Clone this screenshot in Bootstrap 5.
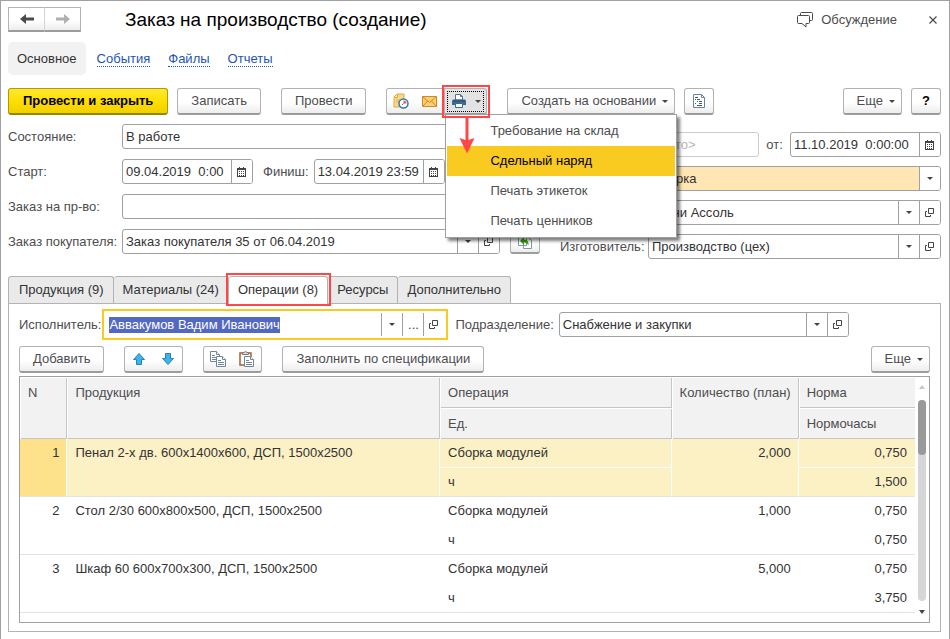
<!DOCTYPE html>
<html lang="ru">
<head>
<meta charset="utf-8">
<meta name="viewport" content="width=device-width, initial-scale=1">
<title>Заказ на производство (создание)</title>
<link rel="stylesheet" href="https://cdn.jsdelivr.net/npm/bootstrap@5.3.0/dist/css/bootstrap.min.css">
<style>
:root { --line: #a0a0a0; --ink: #333; --soft: #4d4d4d; --mark: #ff4747; }
body { font: 13px/16px "Liberation Sans", Arial, sans-serif; color: var(--soft); background: #fff; }
.window { min-height: 100vh; border: 1px solid var(--line); padding: 6px 8px 7px 7px; }
svg { display: block; flex: none; }

.title { font-size: 19px; line-height: 24px; color: #000; margin: 0 0 0 44px; font-weight: 400; }
.plain { border: 0; background: none; padding: 0; color: var(--soft); }

.sections { margin-top: 10px; gap: 18px; }
.sections a { color: #1d54b5; text-decoration: none; border-bottom: 1px dotted #1d54b5; line-height: 15px; }
.sections .current { color: var(--ink); background: #f2f2f2; border: 0; border-radius: 5px; padding: 9px 9px 8px; line-height: 16px; margin-right: -7px; }
.tools { margin-top: 13px; }

/* push buttons */
.cmd { --bs-btn-font-size: 13px; --bs-btn-line-height: 16px; --bs-btn-padding-x: 13px; --bs-btn-padding-y: 4px;
  --bs-btn-border-radius: 3px; --bs-btn-color: var(--soft); --bs-btn-border-color: #b3b3b3;
  height: 27px; border-bottom: 2px solid #9c9c9c; background: linear-gradient(#fff 55%, #ededed);
  display: inline-flex; align-items: center; justify-content: center; white-space: nowrap; }
.cmd-main { --bs-btn-padding-x: 14px; font-weight: 700; color: #000; background: linear-gradient(#ffe732, #ffdf00 50%, #f2cf00); border-color: #b09a00; border-bottom-color: #9a8600; }
.cmd-icon { width: 30px; padding: 0; }
.btn-group > .cmd-icon { flex: none; }
.btn-group > .cmd-icon:not(:first-child) { margin-left: 0; border-left: 0; }
.btn-group > .cmd-icon:not(:last-child) { border-right-color: #b3b3b3; }
.cmd-drop { padding-right: 6px; gap: 6px; }
.caret { width: 0; height: 0; border: 3px solid transparent; border-top-color: #444; border-bottom: 0; flex: none; }
.gap9 { gap: 9px; }
.gap20 { gap: 20px; }
.nav-pair .cmd { width: 37px; height: 25px; padding: 0; border-radius: 0; flex: none; }
.nav-pair .cmd:last-child { margin-left: 0; border-left-color: #d5d5d5; }
.nav-pair .cmd:first-child { border-right: 0; }

.print-btn { width: 42px; padding: 0; border-left: 0; background: #e3e3e3; border-radius: 0 3px 3px 0; }
.print-btn::after { display: none; }
.print-btn .dots { border: 1px dotted #000; display: flex; align-items: center; gap: 9px; height: 21px; width: 37px; padding-left: 4px; }
.frame { position: absolute; inset: -3px; border: 2px solid var(--mark); z-index: 1002; pointer-events: none; }
.pointer { position: absolute; left: 14px; top: 29px; z-index: 1002; pointer-events: none; }
.print-menu { --bs-dropdown-font-size: 13px; --bs-dropdown-padding-y: 1px; --bs-dropdown-padding-x: 1px; --bs-dropdown-item-padding-x: 43px;
  --bs-dropdown-item-padding-y: 7px; --bs-dropdown-border-radius: 0; --bs-dropdown-border-color: #a0a0a0; --bs-dropdown-spacer: 0;
  --bs-dropdown-link-color: var(--soft); --bs-dropdown-link-active-bg: #f9cb20; --bs-dropdown-link-active-color: #000;
  width: 232px; top: 26px; left: 0; box-shadow: 3px 3px 3px rgba(0,0,0,.5); }
.print-menu .dropdown-item { line-height: 16px; }

/* fields */
.props { margin-top: 9px; }
.field { height: 25px; border: 1px solid var(--line); border-radius: 3px; background: #fff; display: flex; min-width: 0; overflow: hidden; }
.field input, .field select { border: 0; outline: 0; background: transparent; flex: 1 1 0; width: 0; min-width: 0; padding: 0 3px; color: var(--ink); font: inherit; line-height: 16px; }
.field select { appearance: none; }
.field button { border: 0; border-left: 1px solid var(--line); background: #fff; width: 21px; flex: none; padding: 0; color: #444; display: flex; align-items: center; justify-content: center; }
.left { flex: 1 1 0; min-width: 0; display: grid; gap: 10px; align-content: start; }
.right { flex: 0 0 381px; display: grid; gap: 9px; margin-top: 8px; align-content: start; }
.line { display: flex; align-items: center; min-width: 0; }
.left .line > label:first-child { width: 114px; flex: none; white-space: nowrap; }
.right .line > label:first-child { width: 88px; flex: none; white-space: nowrap; }
.right .covered { margin-left: 88px; }
.date { flex: none; width: 131px; }
.date-long { width: 151px; }
.finish-label { margin: 0 5px 0 10px; }
.disabled-field { width: 111px; border-color: #ccc; }
.disabled-field input::placeholder { color: #b8b8b8; opacity: 1; }
.required { background: #ffe6b3; }
.refresh { margin-left: 10px; height: 25px; }

/* tabs */
.pages { margin-top: 17px; border-bottom: 0; }
.pages .nav-link { font-size: 13px; line-height: 16px; padding: 5px 9px 6px 10px; color: var(--ink); background: #eaeaea; border: 1px solid #b3b3b3; border-bottom: 0; border-radius: 3px 3px 0 0; height: 27px; margin: 0; }
.pages .nav-item + .nav-item .nav-link { border-left: 0; padding-left: 9px; }
.pages .nav-item { position: relative; }
.pages .nav-link.active { color: var(--ink); background: #fff; height: 28px; margin-bottom: -1px; border-color: #b3b3b3; }
.page { border: 1px solid #b3b3b3; padding: 5px 10px 8px; flex: 1; display: flex; flex-direction: column; }
.performer { border: 2px solid #f9cb20; padding: 1px; margin-left: 1px; width: 346px; flex: none; }
.performer .field { border-color: transparent; }
.performer input { caret-color: transparent; }
.performer input::selection { background: rgba(81,103,192,.99); color: #fff; }
.dept-label { margin: 0 5px 0 7px; }
.page .department { width: 290px; }
.list-tools { margin-top: 6px; }

/* list of operations */
.listbox { border: 1px solid var(--line); display: flex; flex: 1; margin-top: 3px; padding-bottom: 9px; }
.ops { flex: 1; table-layout: fixed; border-collapse: separate; border-spacing: 0; color: var(--ink); align-self: flex-start; }
.ops th { font-weight: 400; color: var(--soft); background: #f2f2f2; vertical-align: top; padding: 7px 8px 7px 7px; height: 31px; border: 1px solid #fff; border-width: 1px 0 0 1px; box-shadow: inset -1px -1px #c6c6c6; }
.ops th.last-col { box-shadow: inset 0 -1px #c6c6c6; }
.ops td { vertical-align: top; height: 29px; padding: 6px 8px; }
.ops tr.second td, .ops td[rowspan] { border-bottom: 1px solid #e3e3e3; }
.ops .num { text-align: right; }
.ops tr.sel td { background: #fcf0c5; border-right: 1px solid #fff; padding-right: 7px; }
.ops tr.sel td.mark-cell { background: #fde28b; }
.ops tr.sel.first td:not([rowspan]) { border-bottom: 1px solid #fff; }
.ops tr.sel td.last-col { border-right: 0; padding-right: 8px; }
.bar { width: 14px; flex: none; display: flex; flex-direction: column; align-items: center; padding-top: 8px; margin-bottom: -7px; }
.bar .up { border-top: 0; border-bottom: 4px solid #c6c6c6; }
.bar .down { border-width: 4px 3px 0; border-top-color: #444; margin: 9px 0 6px; }
.track { width: 8px; flex: 1; background: #d6d6d6; border-radius: 4px; margin-top: 11px; }
.thumb { height: 55px; background: #999; border-radius: 4px; }
</style>
<script src="https://cdn.jsdelivr.net/npm/bootstrap@5.3.0/dist/js/bootstrap.bundle.min.js"></script>
</head>
<body>
<svg width="0" height="0" class="position-absolute" aria-hidden="true">
  <symbol id="cal" viewBox="0 0 10 10"><path d="M0 1h9v9H0z" fill="#444"/><path d="M2 0h1v2H2zM6 0h1v2H6z" fill="#444"/><path d="M1 3h7v6H1z" fill="#fff"/><path d="M2 4h1v1H2zm2 0h1v1H4zm2 0h1v1H6zM2 6h1v1H2zm2 0h1v1H4zm2 0h1v1H6zM2 8h1v1H2zm2 0h1v1H4zm2 0h1v1H6z" fill="#444"/></symbol>
  <symbol id="open" viewBox="0 0 10 10"><path d="M3.500.5h5v5h-5zM2 3.500H.5v5h5V7" fill="none" stroke="#444"/></symbol>
</svg>
<main class="window d-flex flex-column">
  <header class="d-flex align-items-center">
    <div class="btn-group nav-pair">
      <button class="btn cmd" type="button" aria-label="Назад"><svg width="14" height="10" viewBox="0 0 14 10"><path d="M0 5l6-5v3.500h8v3H6V10z" fill="#4a4a4a"/></svg></button>
      <button class="btn cmd" type="button" aria-label="Вперед"><svg width="14" height="10" viewBox="0 0 14 10"><path d="M14 5L8 0v3.500H0v3h8V10z" fill="#b0b0b0"/></svg></button>
    </div>
    <h1 class="title">Заказ на производство (создание)</h1>
    <button class="plain d-flex align-items-center gap-2 ms-auto" type="button"><svg width="16" height="16" viewBox="0 0 16 16"><path d="M3.500 3V1.500q0-1 1-1h10q1 0 1 1v6q0 1-1 1H13M1.500 3.500h10q1 0 1 1v6q0 1-1 1H9V15l-4-3.500H1.500q-1 0-1-1v-6q0-1 1-1z" fill="none" stroke="#4a4a4a"/></svg>Обсуждение</button>
    <button class="plain ms-4 ps-2 me-1" type="button" aria-label="Закрыть"><svg width="8" height="8" viewBox="0 0 8 8"><path d="M.5.5l7 7m0-7l-7 7" stroke="#4a4a4a" stroke-width="1.200"/></svg></button>
  </header>

  <nav class="sections d-flex align-items-center">
    <a href="#" class="current">Основное</a><a href="#">События</a><a href="#">Файлы</a><a href="#">Отчеты</a>
  </nav>

  <div class="tools d-flex gap20">
    <div class="d-flex gap9">
      <button class="btn cmd cmd-main" type="button">Провести и закрыть</button>
      <button class="btn cmd" type="button">Записать</button>
    </div>
    <button class="btn cmd" type="button">Провести</button>
    <div class="btn-group">
      <button class="btn cmd cmd-icon" type="button" aria-label="Напоминание"><svg width="16" height="16" viewBox="0 0 16 16"><path d="M1 4l3-3h7v13H1z" fill="#f6d98b" stroke="#d9a94a"/><path d="M1.500 4.500H4.500V1.500" fill="#fff1c4" stroke="#d9a94a"/><path d="M3 7h5M3 9h4" stroke="#dfb155"/><circle cx="10.500" cy="10.500" r="4.500" fill="#fff" stroke="#3d76a8" stroke-width="1.500"/><path d="M10.500 10.500V7.500A3 3 0 0 1 13.500 10.500z" fill="#ec5f45"/><path d="M10.500 10.500l-1.500 1.500" stroke="#666"/></svg></button>
      <button class="btn cmd cmd-icon" type="button" aria-label="Письмо"><svg width="15" height="11" viewBox="0 0 15 11"><path d="M.5.5h14v10H.5z" fill="#fbcf72" stroke="#cf8a25"/><path d="M1 1l6.500 5.500L14 1M1 10l4.500-5M14 10L9.500 5" fill="none" stroke="#cf8a25"/></svg></button>
      <div class="position-relative">
        <button class="btn cmd print-btn dropdown-toggle" type="button" aria-label="Печать" aria-expanded="true"><span class="dots"><svg width="14" height="14" viewBox="0 0 14 14"><path d="M3.500 6V.500h5l2 2V6z" fill="#fff" stroke="#4d7594"/><path d="M8.500.5v2h2" fill="none" stroke="#4d7594"/><path d="M1 5.500h12l1 1V11H0V6.500z" fill="#3a6a91"/><path d="M1 7h12" stroke="#274f70"/><path d="M3.500 9.500h7v4h-7z" fill="#fff" stroke="#3a6a91"/></svg><span class="caret"></span></span></button>
        <ul class="dropdown-menu print-menu show">
          <li><a class="dropdown-item" href="#">Требование на склад</a></li>
          <li><a class="dropdown-item active" href="#">Сдельный наряд</a></li>
          <li><a class="dropdown-item" href="#">Печать этикеток</a></li>
          <li><a class="dropdown-item" href="#">Печать ценников</a></li>
        </ul>
        <span class="frame"></span>
        <svg class="pointer" width="16" height="37" viewBox="0 0 16 37"><path d="M6.500 0h3v23L15.500 21 8 36.500.5 21l6 2z" fill="#ff4747"/></svg>
      </div>
    </div>
    <div class="d-flex gap9">
      <button class="btn cmd cmd-drop" type="button">Создать на основании<span class="caret"></span></button>
      <button class="btn cmd cmd-icon" type="button" aria-label="Отчет"><svg width="12" height="14" viewBox="0 0 12 14"><path d="M.5.5h8l3 3v10H.5z" fill="#fff" stroke="#6c82a3"/><path d="M8.500.5v3h3" fill="none" stroke="#6c82a3"/><path d="M2 3.500h3M4 5.500h3M4 7.500h1M6 7.500h3M2 9.500h1M6 9.500h3M4 11.500h5M2 5.500h1" stroke="#3c5a86"/></svg></button>
    </div>
    <div class="d-flex gap9 ms-auto">
      <button class="btn cmd cmd-drop" type="button">Еще<span class="caret"></span></button>
      <button class="btn cmd cmd-icon fw-bold text-black" type="button" aria-label="Справка">?</button>
    </div>
  </div>

  <form class="props d-flex gap20">
    <div class="left">
      <div class="line"><label for="state">Состояние:</label>
        <div class="field flex-fill me-5"><select id="state"><option>В работе</option></select></div></div>
      <div class="line"><label for="start">Старт:</label>
        <div class="field date"><input id="start" value="09.04.2019&nbsp; 0:00"><button type="button" aria-label="Выбрать дату"><svg width="10" height="10"><use href="#cal"/></svg></button></div>
        <label for="finish" class="finish-label">Финиш:</label>
        <div class="field date"><input id="finish" value="13.04.2019 23:59"><button type="button" aria-label="Выбрать дату"><svg width="10" height="10"><use href="#cal"/></svg></button></div></div>
      <div class="line"><label for="prod">Заказ на пр-во:</label>
        <div class="field flex-fill me-5"><input id="prod"></div></div>
      <div class="line"><label for="buyer">Заказ покупателя:</label>
        <div class="field flex-fill"><input id="buyer" value="Заказ покупателя 35 от 06.04.2019"><button type="button" aria-label="Выбрать"><span class="caret"></span></button><button type="button" aria-label="Открыть"><svg width="10" height="10"><use href="#open"/></svg></button></div>
        <button class="btn cmd cmd-icon refresh" type="button" aria-label="Заполнить по заказу"><svg width="16" height="15" viewBox="0 0 16 15"><path d="M1.500.500h6l2 2v9h-8zM6.500 3.500h5l3 3v8h-8z" fill="#fff" stroke="#8397ad"/><path d="M3 7l4-4v2.500q5 0 4.500 6Q10 8.500 7 8.500V11z" fill="#35a800"/></svg></button></div>
    </div>
    <div class="right">
      <div class="line">
        <div class="field disabled-field covered"><input aria-label="Номер" placeholder="&lt;Авто&gt;" disabled></div>
        <label for="from" class="mx-auto">от:</label>
        <div class="field date date-long"><input id="from" value="11.10.2019&nbsp; 0:00:00"><button type="button" aria-label="Выбрать дату"><svg width="10" height="10"><use href="#cal"/></svg></button></div></div>
      <div class="line">
        <div class="field flex-fill required covered"><input aria-label="Операция" value="Сборка"><button type="button" aria-label="Выбрать"><span class="caret"></span></button></div></div>
      <div class="line">
        <div class="field flex-fill covered"><input aria-label="Организация" value="Кухни Ассоль"><button type="button" aria-label="Выбрать"><span class="caret"></span></button><button type="button" aria-label="Открыть"><svg width="10" height="10"><use href="#open"/></svg></button></div></div>
      <div class="line"><label for="maker">Изготовитель:</label>
        <div class="field flex-fill"><input id="maker" value="Производство (цех)"><button type="button" aria-label="Выбрать"><span class="caret"></span></button><button type="button" aria-label="Открыть"><svg width="10" height="10"><use href="#open"/></svg></button></div></div>
    </div>
  </form>

  <ul class="nav nav-tabs pages">
    <li class="nav-item"><button class="nav-link" type="button">Продукция (9)</button></li>
    <li class="nav-item"><button class="nav-link" type="button">Материалы (24)</button></li>
    <li class="nav-item"><button class="nav-link active" type="button">Операции (8)</button><span class="frame"></span></li>
    <li class="nav-item"><button class="nav-link" type="button">Ресурсы</button></li>
    <li class="nav-item"><button class="nav-link" type="button">Дополнительно</button></li>
  </ul>
  <section class="page">
    <div class="d-flex align-items-center">
      <label for="worker">Исполнитель:</label>
      <div class="performer"><div class="field"><input id="worker" value="Аввакумов Вадим Иванович" autofocus><button type="button" aria-label="Выбрать"><span class="caret"></span></button><button type="button" aria-label="Показать все">...</button><button type="button" aria-label="Открыть"><svg width="10" height="10"><use href="#open"/></svg></button></div></div>
      <label for="dept" class="dept-label">Подразделение:</label>
      <div class="field department"><input id="dept" value="Снабжение и закупки"><button type="button" aria-label="Выбрать"><span class="caret"></span></button><button type="button" aria-label="Открыть"><svg width="10" height="10"><use href="#open"/></svg></button></div>
    </div>
    <div class="list-tools d-flex gap20">
      <button class="btn cmd" type="button">Добавить</button>
      <div class="btn-group">
        <button class="btn cmd cmd-icon" type="button" aria-label="Вверх"><svg width="12" height="12" viewBox="0 0 12 12"><path d="M6 .5l5.500 6H8.500v5h-5v-5H.5z" fill="#3db3ee" stroke="#2a80b5"/></svg></button>
        <button class="btn cmd cmd-icon" type="button" aria-label="Вниз"><svg width="12" height="12" viewBox="0 0 12 12"><path d="M6 11.500l5.500-6H8.500v-5h-5v5H.5z" fill="#3db3ee" stroke="#2a80b5"/></svg></button>
      </div>
      <div class="btn-group">
        <button class="btn cmd cmd-icon" type="button" aria-label="Копировать"><svg width="16" height="16" viewBox="0 0 16 16"><g fill="#fff" stroke="#71849b"><path d="M.5.500h6l3 3v7h-9z"/><path d="M6.500.5v3h3M2 4.500h3M2 6.500h4M2 8.500h4"/><path d="M6.500 5.500h6l3 3v7h-9z"/><path d="M12.500 5.500v3h3M8 9.500h3M8 11.500h6M8 13.500h6"/></g></svg></button>
        <button class="btn cmd cmd-icon" type="button" aria-label="Вставить"><svg width="16" height="16" viewBox="0 0 16 16"><path d="M1 2h11v12H1z" fill="#fff" stroke="#a2622f" stroke-width="1.500"/><path d="M3.500 3.500v-2H5q1.500-2 3 0h1.500v2z" fill="#ddd" stroke="#777"/><g fill="#fff" stroke="#71849b"><path d="M5.500 5.500h6l3 3v7h-9z"/><path d="M11.500 5.500v3h3M7 9.500h3M7 11.500h6M7 13.500h6"/></g></svg></button>
      </div>
      <button class="btn cmd" type="button">Заполнить по спецификации</button>
      <button class="btn cmd cmd-drop ms-auto" type="button">Еще<span class="caret"></span></button>
    </div>
    <div class="listbox">
      <table class="ops">
        <colgroup><col style="width:5.3%"><col style="width:41.7%"><col style="width:25.9%"><col style="width:14.1%"><col style="width:13%"></colgroup>
        <thead>
          <tr><th rowspan="2">N</th><th rowspan="2">Продукция</th><th>Операция</th><th rowspan="2" class="text-nowrap">Количество (план)</th><th class="last-col">Норма</th></tr>
          <tr><th>Ед.</th><th class="last-col">Нормочасы</th></tr>
        </thead>
        <tbody>
          <tr class="first sel"><td rowspan="2" class="num mark-cell">1</td><td rowspan="2">Пенал 2-х дв. 600х1400х600, ДСП, 1500х2500</td><td>Сборка модулей</td><td rowspan="2" class="num">2,000</td><td class="num last-col">0,750</td></tr>
          <tr class="second sel"><td>ч</td><td class="num last-col">1,500</td></tr>
          <tr class="first"><td rowspan="2" class="num">2</td><td rowspan="2">Стол 2/30 600х800х500, ДСП, 1500х2500</td><td>Сборка модулей</td><td rowspan="2" class="num">1,000</td><td class="num">0,750</td></tr>
          <tr class="second"><td>ч</td><td class="num">0,750</td></tr>
          <tr class="first"><td rowspan="2" class="num">3</td><td rowspan="2">Шкаф 60 600х700х300, ДСП, 1500х2500</td><td>Сборка модулей</td><td rowspan="2" class="num">5,000</td><td class="num">0,750</td></tr>
          <tr class="second"><td>ч</td><td class="num">3,750</td></tr>
        </tbody>
      </table>
      <div class="bar"><span class="caret up"></span><div class="track"><div class="thumb"></div></div><span class="caret down"></span></div>
    </div>
  </section>
</main>
<script>
const worker = document.getElementById('worker');
worker.focus({ preventScroll: true });
worker.select();
</script>
</body>
</html>
